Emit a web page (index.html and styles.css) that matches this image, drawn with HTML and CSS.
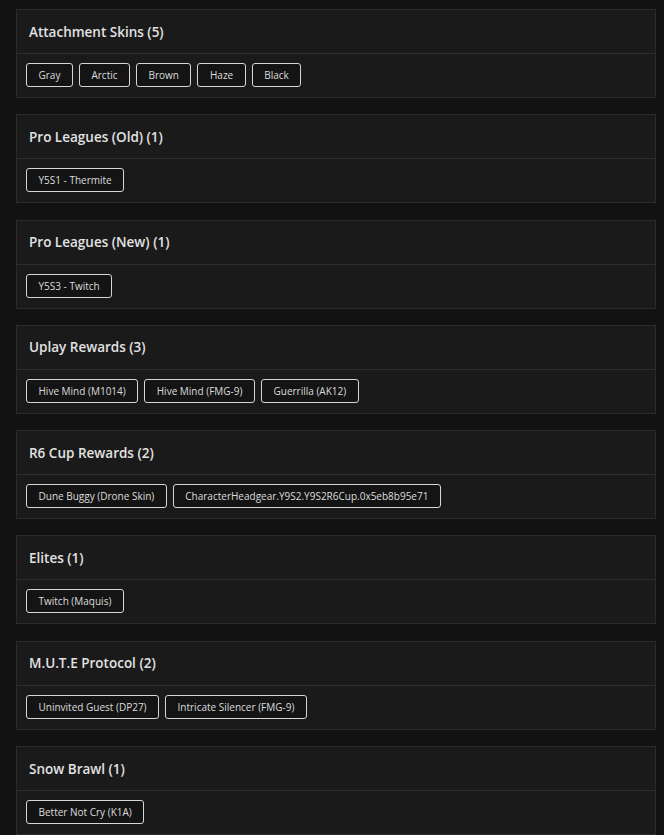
FILE: index.html
```html
<!DOCTYPE html>
<html>
<head>
<meta charset="utf-8">
<link rel="stylesheet" href="styles.css">
</head>
<body>
<div class="list">
  <section class="card">
    <div class="card-head">Attachment Skins (5)</div>
    <div class="card-body">
      <span class="tag">Gray</span><span class="tag">Arctic</span><span class="tag">Brown</span><span class="tag">Haze</span><span class="tag">Black</span>
    </div>
  </section>
  <section class="card">
    <div class="card-head">Pro Leagues (Old) (1)</div>
    <div class="card-body"><span class="tag">Y5S1 - Thermite</span></div>
  </section>
  <section class="card">
    <div class="card-head">Pro Leagues (New) (1)</div>
    <div class="card-body"><span class="tag">Y5S3 - Twitch</span></div>
  </section>
  <section class="card">
    <div class="card-head">Uplay Rewards (3)</div>
    <div class="card-body"><span class="tag">Hive Mind (M1014)</span><span class="tag">Hive Mind (FMG-9)</span><span class="tag">Guerrilla (AK12)</span></div>
  </section>
  <section class="card">
    <div class="card-head">R6 Cup Rewards (2)</div>
    <div class="card-body"><span class="tag">Dune Buggy (Drone Skin)</span><span class="tag">CharacterHeadgear.Y9S2.Y9S2R6Cup.0x5eb8b95e71</span></div>
  </section>
  <section class="card">
    <div class="card-head">Elites (1)</div>
    <div class="card-body"><span class="tag">Twitch (Maquis)</span></div>
  </section>
  <section class="card">
    <div class="card-head">M.U.T.E Protocol (2)</div>
    <div class="card-body"><span class="tag">Uninvited Guest (DP27)</span><span class="tag">Intricate Silencer (FMG-9)</span></div>
  </section>
  <section class="card">
    <div class="card-head">Snow Brawl (1)</div>
    <div class="card-body"><span class="tag">Better Not Cry (K1A)</span></div>
  </section>
</div>
</body>
</html>
```
FILE: styles.css
```css
html, body {
  margin: 0;
  padding: 0;
  background: #121212;
}
body {
  font-family: "Open Sans", "DejaVu Sans", sans-serif;
  color: #e4e4e4;
  height: 835px;
  overflow: hidden;
}
.list {
  display: flex;
  flex-direction: column;
  gap: 16.3px;
  padding: 9px 8px 0 16px;
}
.card {
  background: #1a1a1a;
  border: 1px solid #2b2b2b;
}
.card-head {
  height: 43px;
  display: flex;
  align-items: center;
  padding: 0 12px;
  border-bottom: 1px solid #2e2e2e;
  font-size: 13.5px;
  font-weight: 600;
  color: #e2e2e2;
}
.card-body {
  display: flex;
  flex-wrap: wrap;
  gap: 6px;
  padding: 9px 9px 10px;
}
.tag {
  height: 24px;
  box-sizing: border-box;
  display: inline-flex;
  align-items: center;
  padding: 0 11.5px;
  border: 1px solid #d6d6d6;
  border-radius: 3px;
  background: #141414;
  font-size: 10px;
  color: #dcdcdc;
}
```
